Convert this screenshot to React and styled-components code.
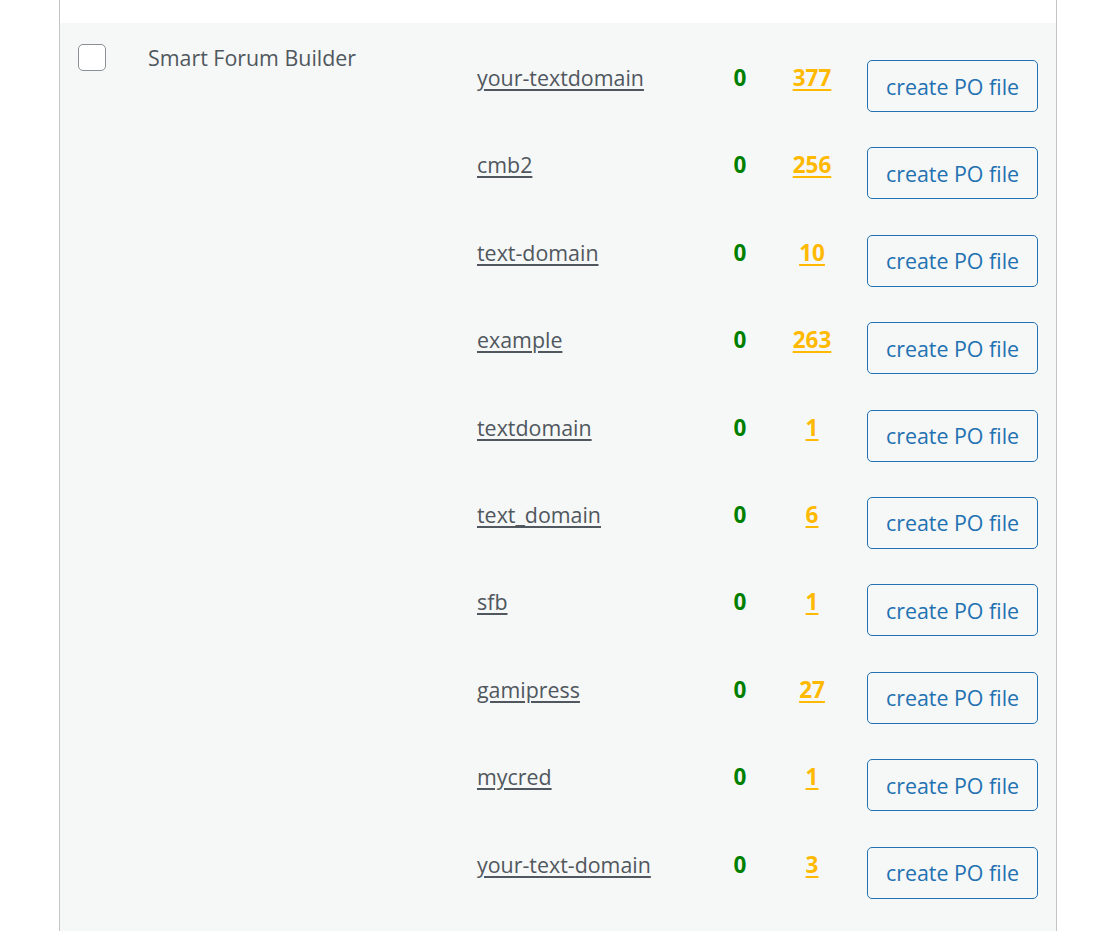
import React from 'react'
import styled, { createGlobalStyle } from 'styled-components'

const GlobalStyle = createGlobalStyle`
  body {
    margin: 0;
    background: #fff;
    font-family: "Open Sans", "Noto Sans", sans-serif;
  }
`

const Table = styled.div`
  margin-left: 59px;
  width: 998px;
  border-left: 1px solid #c3c4c7;
  border-right: 1px solid #c3c4c7;
  min-height: 931px;
  box-sizing: border-box;
  padding-top: 23px;
`

const PluginRow = styled.div`
  display: grid;
  grid-template-columns: 70px 329px 1fr;
  background: #f6f7f7;
  padding: 17px 18px 40px 18px;
`

const Check = styled.span`
  display: block;
  width: 28px;
  height: 27px;
  margin-top: 4px;
  box-sizing: border-box;
  border: 1px solid #8c8f94;
  border-radius: 5px;
  background: #fff;
`

const Name = styled.div`
  font-size: 21.4px;
  line-height: 36px;
  color: #50575e;
`

const Domains = styled.div`
  display: grid;
  grid-template-columns: 236px 54px 90px 1fr;
  grid-auto-rows: 87.4px;
  margin-top: 20px;
  align-items: start;
`

const DomainLink = styled.a`
  font-size: 21.4px;
  line-height: 36px;
  color: #50575e;
  text-decoration: underline;
  text-underline-offset: 3px;
  cursor: pointer;
`

const Count = styled.span`
  font-size: 22.5px;
  line-height: 36px;
  font-weight: 700;
  text-align: center;
  color: ${(p) => p.color};
  text-decoration: ${(p) => (p.$link ? 'underline' : 'none')};
  text-decoration-color: ${(p) => p.color};
  text-underline-offset: 3px;
`

const Button = styled.button`
  justify-self: end;
  width: 171px;
  height: 52px;
  border: 1px solid #2271b1;
  border-radius: 5px;
  background: #f6f7f7;
  color: #2271b1;
  font-family: inherit;
  font-size: 21.4px;
  padding: 0;
  cursor: pointer;
`

const domains = [
  ['your-textdomain', 377],
  ['cmb2', 256],
  ['text-domain', 10],
  ['example', 263],
  ['textdomain', 1],
  ['text_domain', 6],
  ['sfb', 1],
  ['gamipress', 27],
  ['mycred', 1],
  ['your-text-domain', 3],
]

export default function App() {
  return (
    <>
      <GlobalStyle />
      <Table>
        <PluginRow>
          <div>
            <Check />
          </div>
          <Name>Smart Forum Builder</Name>
          <Domains>
            {domains.map(([name, count]) => (
              <React.Fragment key={name}>
                <div>
                  <DomainLink>{name}</DomainLink>
                </div>
                <Count color="#008000">0</Count>
                <Count color="#ffb900" $link>
                  {count}
                </Count>
                <Button>create PO file</Button>
              </React.Fragment>
            ))}
          </Domains>
        </PluginRow>
      </Table>
    </>
  )
}
